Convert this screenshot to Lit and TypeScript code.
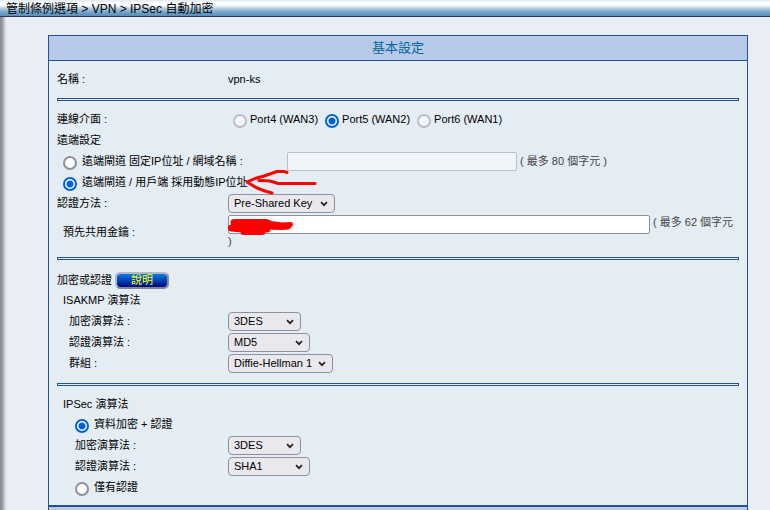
import { LitElement, html, css } from "lit";
import { customElement, property } from "lit/decorators.js";

@customElement("algo-select")
class AlgoSelect extends LitElement {
  @property() name = "";
  @property({ type: Array }) options: string[] = [];
  @property() size = "s";

  static styles = css`
    :host {
      display: block;
      height: 19px;
    }
    .wrap {
      display: inline-grid;
      align-items: center;
      vertical-align: top;
    }
    select,
    svg {
      grid-area: 1 / 1;
    }
    select {
      appearance: none;
      box-sizing: border-box;
      height: 19px;
      margin: 0;
      padding: 0 0 0 5px;
      border: 1px solid #8f8f9d;
      border-radius: 4px;
      background: #e9e9ed;
      color: #000;
      font: 11px/17px "Liberation Sans", "Noto Sans CJK TC", sans-serif;
    }
    .s { width: 73px; }
    .m { width: 82px; }
    .l { width: 105px; }
    .xl { width: 107px; }
    svg {
      justify-self: end;
      margin-right: 7px;
      pointer-events: none;
    }
  `;

  render() {
    return html`<span class="wrap">
      <select class=${this.size} aria-label=${this.name}>
        ${this.options.map((o) => html`<option>${o}</option>`)}
      </select>
      <svg width="8" height="6" viewBox="0 0 8 6" aria-hidden="true">
        <path d="M1 1.2 L4 4.2 L7 1.2" fill="none" stroke="#222" stroke-width="1.7" />
      </svg>
    </span>`;
  }
}

@customElement("app-root")
class AppRoot extends LitElement {
  static styles = css`
    :host {
      display: block;
      position: relative;
      box-sizing: border-box;
      height: 100vh;
      overflow: hidden;
      background: linear-gradient(90deg, #85868c 0, #a4a5ac 3px, #d8dae3 5px, #e9edf6 7px);
      color: #000;
      font: 11px/19px "Liberation Sans", "Noto Sans CJK TC", sans-serif;
    }
    .crumbs {
      box-sizing: border-box;
      height: 17px;
      padding: 1px 0 0 6px;
      border-bottom: 1px solid #2d3561;
      background: linear-gradient(#dfeaf5 0, #fff 3px, #fff 5px, #a9c6dc 9px, #6a9dc4 13px, #5c8fb8 16px);
      font-size: 12px;
      line-height: 17px;
    }
    .panel {
      margin: 18px 22px 0 48px;
      border: 1px solid #265090;
      border-bottom: 0;
      background: #e4ecf4;
    }
    h1 {
      margin: 0;
      border-bottom: 1px solid #265090;
      background: #b8caea;
      color: #069;
      font-size: 13px;
      font-weight: normal;
      line-height: 24px;
      text-align: center;
    }
    section {
      margin: 0 8px;
      padding: 9px 0 8px;
    }
    hr {
      box-sizing: border-box;
      height: 3px;
      margin: 0 8px;
      border: 1px solid #265090;
      background: #e4ecf8;
    }
    .last {
      padding-bottom: 6px;
    }
    .row {
      display: grid;
      grid-template-columns: 171px 1fr;
      align-items: start;
      min-height: 21px;
    }
    .wide {
      grid-template-columns: 230px 1fr;
    }
    .key {
      min-height: 34px;
    }
    .key > label {
      align-self: center;
    }
    .i1 { padding-left: 6px; }
    .i2 { padding-left: 12px; }
    .i3 { padding-left: 18px; }
    .ports {
      display: flex;
      gap: 7px;
      padding-left: 5px;
    }
    .pick {
      display: flex;
      gap: 3px;
      white-space: nowrap;
    }
    .far {
      gap: 5px;
    }
    input[type="radio"] {
      appearance: none;
      box-sizing: border-box;
      flex: none;
      width: 14px;
      height: 14px;
      margin: 4px 0 0;
      border: 2px solid #8f8f9d;
      border-radius: 50%;
      background: #fff;
    }
    input[type="radio"]:checked {
      border-color: #0060df;
      background: radial-gradient(circle, #0060df 3px, #fff 4px);
    }
    input[type="radio"]:disabled {
      border-color: #bcbecb;
      background: #f1f4f9;
    }
    input[type="text"] {
      box-sizing: border-box;
      height: 19px;
      max-width: 100%;
      margin: 0;
      padding: 0 4px;
      border: 1px solid #8f8f9d;
      border-radius: 2px;
      background: #fff;
      font: inherit;
      vertical-align: top;
    }
    input[type="text"]:disabled {
      border-color: #b9bfcb;
      background: #f1f4f9;
    }
    .domain { width: 230px; }
    .secret { width: 422px; }
    .hint {
      color: #444;
      line-height: 15px;
    }
    .head {
      display: flex;
      align-items: center;
      gap: 3px;
      height: 22px;
    }
    .short {
      min-height: 20px;
    }
    button {
      box-sizing: border-box;
      width: 54px;
      height: 17px;
      padding: 0;
      border: 2px solid;
      border-color: #b4b8c0 #8c8c94 #86868e #b4b8c0;
      border-radius: 5px;
      background: linear-gradient(#0a78e8, #0038a8 60%, #000080) padding-box;
      color: #ff0;
      font: 11px/13px "Liberation Sans", "Noto Sans CJK TC", sans-serif;
    }
    .next {
      height: 24px;
      margin: 0 22px 0 48px;
      border: 1px solid #265090;
      border-top-width: 2px;
      background: #b8caea;
    }
    .marks {
      position: absolute;
      left: 222px;
      top: 166px;
      pointer-events: none;
    }
  `;

  render() {
    return html`
      <nav class="crumbs">管制條例選項 &gt; VPN &gt; IPSec 自動加密</nav>
      <form class="panel">
        <h1>基本設定</h1>
        <section>
          <div class="row short"><span>名稱 :</span><span>vpn-ks</span></div>
        </section>
        <hr />
        <section>
          <div class="row">
            <span>連線介面 :</span>
            <div class="ports">
              <label class="pick"><input type="radio" name="port" disabled />Port4 (WAN3)</label>
              <label class="pick"><input type="radio" name="port" checked />Port5 (WAN2)</label>
              <label class="pick"><input type="radio" name="port" disabled />Port6 (WAN1)</label>
            </div>
          </div>
          <div class="row">遠端設定</div>
          <div class="row wide">
            <label class="pick far i1"><input type="radio" name="remote" />遠端閘道 固定IP位址 / 網域名稱 :</label>
            <div><input class="domain" type="text" aria-label="網域名稱" disabled /> <span class="hint">( 最多 80 個字元 )</span></div>
          </div>
          <div class="row wide">
            <label class="pick far i1"><input type="radio" name="remote" checked />遠端閘道 / 用戶端 採用動態IP位址</label>
          </div>
          <div class="row">
            <span>認證方法 :</span>
            <algo-select name="認證方法" size="xl" .options=${["Pre-Shared Key"]}></algo-select>
          </div>
          <div class="row key">
            <label class="i1" for="psk">預先共用金鑰 :</label>
            <div class="hint"><input class="secret" id="psk" type="text" /> ( 最多 62 個字元 )</div>
          </div>
        </section>
        <hr />
        <section>
          <div class="head"><span>加密或認證</span><button type="button">說明</button></div>
          <div class="row i1">ISAKMP 演算法</div>
          <div class="row">
            <span class="i2">加密演算法 :</span>
            <algo-select name="加密演算法" .options=${["3DES"]}></algo-select>
          </div>
          <div class="row">
            <span class="i2">認證演算法 :</span>
            <algo-select name="認證演算法" size="m" .options=${["MD5"]}></algo-select>
          </div>
          <div class="row">
            <span class="i2">群組 :</span>
            <algo-select name="群組" size="l" .options=${["Diffie-Hellman 1"]}></algo-select>
          </div>
        </section>
        <hr />
        <section class="last">
          <div class="row short i1">IPSec 演算法</div>
          <div class="row">
            <label class="pick far i3"><input type="radio" name="ipsec" checked />資料加密 + 認證</label>
          </div>
          <div class="row">
            <span class="i3">加密演算法 :</span>
            <algo-select name="加密演算法" .options=${["3DES"]}></algo-select>
          </div>
          <div class="row">
            <span class="i3">認證演算法 :</span>
            <algo-select name="認證演算法" size="m" .options=${["SHA1"]}></algo-select>
          </div>
          <div class="row">
            <label class="pick far i3"><input type="radio" name="ipsec" />僅有認證</label>
          </div>
        </section>
      </form>
      <div class="next"></div>
      <svg class="marks" width="100" height="72" viewBox="0 0 100 72" fill="none" stroke="#f00" stroke-linecap="round" stroke-linejoin="round" aria-hidden="true">
        <path stroke-width="3" d="M65 6.5 L62 5.5 H55 L42 10 L33 12.5 L25 16 L35 22 L43 25 L50 27" />
        <path stroke-width="3" d="M37 14.5 L48 15 L56 17.5 H93" />
        <path stroke-width="7" d="M12 56.5 H44 L48 58 M9.5 62 L20 63 H45 M22 65.5 H40" />
        <path stroke-width="5" d="M44 57 L60 59 L68.5 58.5 L66 61 L58 61.5 L46 61" />
      </svg>
    `;
  }
}
